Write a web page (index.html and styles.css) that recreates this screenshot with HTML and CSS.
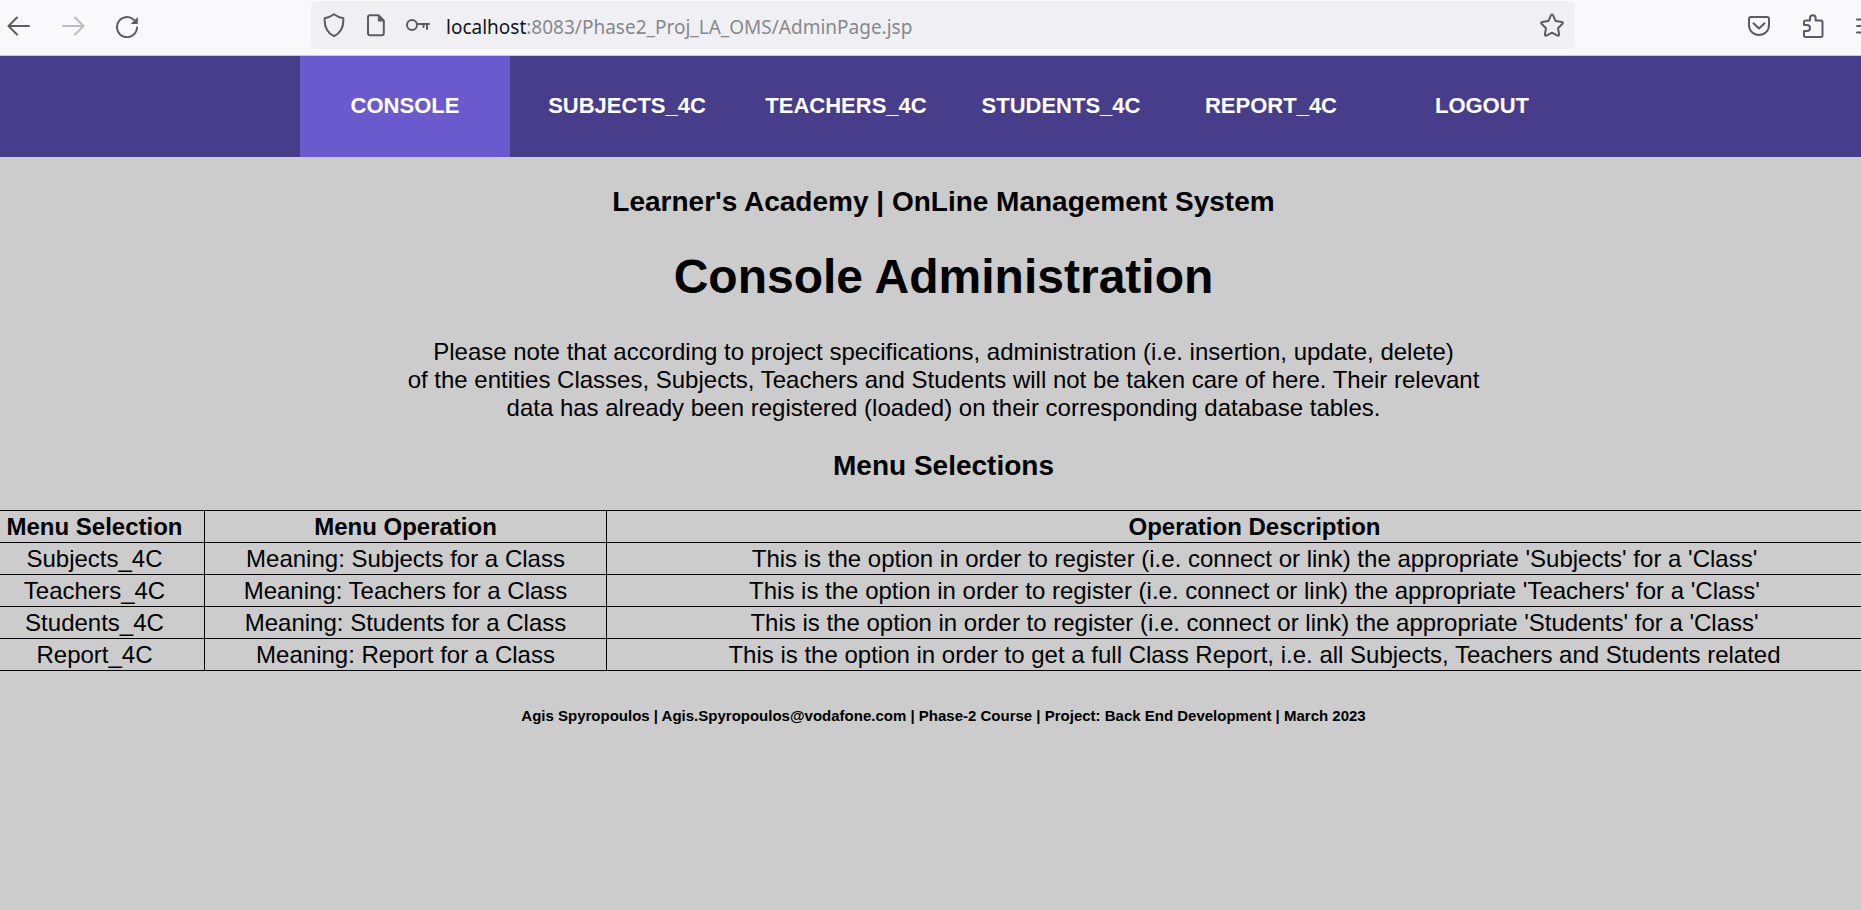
FILE: index.html
```html
<!DOCTYPE html>
<html lang="en">
<head>
<meta charset="utf-8">
<title>Learner's Academy | Console Administration</title>
<link rel="stylesheet" href="styles.css">
</head>
<body>
<div class="toolbar">
  <div class="tools">
    <button class="tool" type="button" aria-label="Back">
      <svg class="icon" viewBox="0 0 24 24"><path d="M22 12H1.500M10 3.500L1.500 12l8.500 8.500"/></svg>
    </button>
    <button class="tool tool-disabled" type="button" aria-label="Forward" disabled>
      <svg class="icon" viewBox="0 0 24 24"><path d="M2 12h20.500M14 3.500l8.500 8.500-8.500 8.500"/></svg>
    </button>
    <button class="tool" type="button" aria-label="Reload">
      <svg class="icon" viewBox="0 0 24 24"><path d="M22 13.500a10 10 0 1 1-3.300-7.800"/><path class="solid" d="M22.800 3v6.600a.5.5 0 0 1-.5.500h-6.600z"/></svg>
    </button>
  </div>
  <div class="address">
    <div class="site-tools">
      <button class="tool" type="button" aria-label="Tracking protection">
        <svg class="icon" viewBox="0 0 24 24"><path d="M12 1.200c3 2.300 6 3.300 9.300 4 .5 7.500-2 14.500-9.300 18C4.700 19.700 2.200 12.700 2.700 5.200 6 4.500 9 3.500 12 1.200z"/></svg>
      </button>
      <button class="tool" type="button" aria-label="Page information">
        <svg class="icon" viewBox="0 0 24 24"><path d="M5.500 2.200h9l5.300 5.300v12.700a2 2 0 0 1-2 2H6a2 2 0 0 1-2-2V4.200a2 2 0 0 1 1.500-2z"/><path class="solid" d="M13.800 2l6.200 6.500h-5.200a1 1 0 0 1-1-1z"/></svg>
      </button>
      <button class="tool" type="button" aria-label="Saved logins">
        <svg class="icon" viewBox="0 0 24 24"><circle cx="6" cy="12" r="5"/><path d="M11 11h12M21 11v5M17.500 11v3"/></svg>
      </button>
    </div>
    <div class="location">
      <label class="host" for="url">localhost</label><input class="url" id="url" type="text" value=":8083/Phase2_Proj_LA_OMS/AdminPage.jsp" spellcheck="false">
    </div>
    <button class="tool" type="button" aria-label="Bookmark this page">
      <svg class="icon" viewBox="0 0 24 24"><path d="M11 2.200a1.100 1.100 0 0 1 2 0l2.700 5.900 6.200.8a1.100 1.100 0 0 1 .6 1.900l-4.500 4.400 1.100 6.300a1.100 1.100 0 0 1-1.600 1.100L12 19.700l-5.500 2.900a1.100 1.100 0 0 1-1.600-1.100L6 15.200l-4.500-4.400a1.100 1.100 0 0 1 .6-1.900l6.200-.8z"/></svg>
    </button>
  </div>
  <div class="tools">
    <button class="tool" type="button" aria-label="Save to Pocket">
      <svg class="icon" viewBox="0 0 24 24"><path d="M4 3h16a2 2 0 0 1 2 2v6c0 6-4.500 10-10 10S2 17 2 11V5a2 2 0 0 1 2-2zM6.500 9.200L12 14.500l5.500-5.300"/></svg>
    </button>
    <button class="tool" type="button" aria-label="Extensions">
      <svg class="icon" viewBox="0 0 24 24"><path d="M3 11V8a1.500 1.500 0 0 1 1.500-1.500H9V4a2.800 2.800 0 0 1 5.600 0v2.500h5.400A1.500 1.500 0 0 1 21.500 8v13.500A1.500 1.500 0 0 1 20 23H4.500A1.500 1.500 0 0 1 3 21.500V17h3a3 3 0 0 0 0-6z"/></svg>
    </button>
    <button class="tool" type="button" aria-label="Menu">
      <svg class="icon" viewBox="0 0 24 24"><path d="M2 5.500h20M2 12h20M2 18.500h20"/></svg>
    </button>
  </div>
</div>

<div class="page">
  <nav class="menu">
    <a class="menu-item menu-active" href="#console">CONSOLE</a>
    <a class="menu-item" href="#subjects">SUBJECTS_4C</a>
    <a class="menu-item" href="#teachers">TEACHERS_4C</a>
    <a class="menu-item" href="#students">STUDENTS_4C</a>
    <a class="menu-item" href="#report">REPORT_4C</a>
    <a class="menu-item" href="#logout">LOGOUT</a>
  </nav>
  <main class="content">
    <h2 class="subtitle">Learner's Academy | OnLine Management System</h2>
    <h1 class="title">Console Administration</h1>
    <p class="note">Please note that according to project specifications, administration (i.e. insertion, update, delete)<br>of the entities Classes, Subjects, Teachers and Students will not be taken care of here. Their relevant<br>data has already been registered (loaded) on their corresponding database tables.</p>
    <h2 class="subtitle">Menu Selections</h2>
    <table class="options">
      <colgroup><col class="col-selection"><col class="col-operation"><col></colgroup>
      <thead>
        <tr><th>Menu Selection</th><th>Menu Operation</th><th>Operation Description</th></tr>
      </thead>
      <tbody>
        <tr><td>Subjects_4C</td><td>Meaning: Subjects for a Class</td><td>This is the option in order to register (i.e. connect or link) the appropriate 'Subjects' for a 'Class'</td></tr>
        <tr><td>Teachers_4C</td><td>Meaning: Teachers for a Class</td><td>This is the option in order to register (i.e. connect or link) the appropriate 'Teachers' for a 'Class'</td></tr>
        <tr><td>Students_4C</td><td>Meaning: Students for a Class</td><td>This is the option in order to register (i.e. connect or link) the appropriate 'Students' for a 'Class'</td></tr>
        <tr><td>Report_4C</td><td>Meaning: Report for a Class</td><td>This is the option in order to get a full Class Report, i.e. all Subjects, Teachers and Students related</td></tr>
      </tbody>
    </table>
  </main>
  <footer class="footer">Agis Spyropoulos | Agis.Spyropoulos@vodafone.com | Phase-2 Course | Project: Back End Development | March 2023</footer>
</div>
</body>
</html>
```
FILE: styles.css
```css
* {
  box-sizing: border-box;
}

html {
  background: #cccccc;
  overflow: hidden;
}

body {
  margin: 0;
  overflow: hidden;
  color: #000;
  font-family: "Liberation Sans", Arial, sans-serif;
  font-size: 24px;
  line-height: 28px;
}

/* Browser toolbar */
.toolbar {
  display: flex;
  align-items: flex-start;
  gap: 172px;
  margin-right: -18px;
  padding: 1px 0 6px 7px;
  background: #f9f9fb;
  border-bottom: 1px solid #ccccd0;
}

.tools {
  display: flex;
  align-items: center;
  gap: 30px;
  height: 48px;
  padding-top: 2px;
}

.tool {
  flex: none;
  width: 24px;
  height: 24px;
  padding: 0;
  border: 0;
  background: none;
  color: #5b5b66;
}

.tool-disabled {
  color: #bcbcc0;
}

.icon {
  display: block;
  width: 24px;
  height: 24px;
  fill: none;
  stroke: currentColor;
  stroke-width: 2;
  stroke-linecap: round;
  stroke-linejoin: round;
}

.icon .solid {
  fill: currentColor;
  stroke: none;
}

.address {
  display: flex;
  flex: 1;
  align-items: center;
  gap: 16px;
  height: 48px;
  padding: 0 11px;
  border-radius: 6px;
  background: #f0f0f4;
}

.site-tools {
  display: flex;
  gap: 18px;
}

.location {
  display: flex;
  flex: 1;
  padding-top: 3px;
  font-family: "Noto Sans", sans-serif;
  font-size: 19px;
}

.host {
  color: #15141a;
}

.url {
  flex: 1;
  min-width: 0;
  padding: 0;
  border: 0;
  background: none;
  color: #87878c;
  font: inherit;
}

/* Page, slightly wider than the window on both sides */
.page {
  margin: 0 -42px 0 -16px;
}

.menu {
  display: grid;
  grid-template-columns: 222px 219px 215px 210px 211px 210px;
  padding-left: 316px;
  background: #483d8b;
}

.menu-item {
  width: 210px;
  padding: 36px 0 37px;
  color: #fff;
  font-size: 22px;
  font-weight: bold;
  text-align: center;
  text-decoration: none;
}

.menu-active {
  background: #6a5acd;
}

.content {
  padding-top: 29px;
  text-align: center;
}

.subtitle {
  margin: 0;
  font-size: 28px;
  line-height: 32px;
}

.title {
  margin: 32px 0 34px;
  font-size: 48px;
  line-height: 54px;
}

.note {
  margin: 0 0 28px;
}

.options {
  width: 100%;
  margin-top: 28px;
  border-collapse: collapse;
  table-layout: fixed;
}

.options th,
.options td {
  height: 32px;
  padding: 1px;
  border: 1px solid #000;
}

.col-selection {
  width: 220px;
}

.col-operation {
  width: 402px;
}

.footer {
  margin-top: 37px;
  font-size: 15px;
  font-weight: bold;
  line-height: 16px;
  text-align: center;
}
```
